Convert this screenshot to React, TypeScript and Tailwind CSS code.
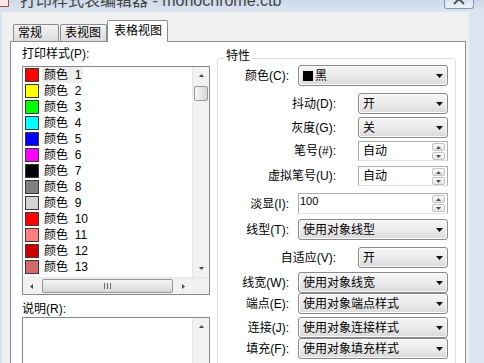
import React from "react";

const swatches = [
  "#ff0000",
  "#ffff00",
  "#00ff00",
  "#00ffff",
  "#0000ff",
  "#ff00ff",
  "#000000",
  "#808080",
  "#d3d3d3",
  "#ff0000",
  "#ff7f7f",
  "#cc0000",
  "#d46a6a",
];

function Tri({ dir, w = 7, h = 4, color = "#111" }: { dir: "up" | "down" | "left" | "right"; w?: number; h?: number; color?: string }) {
  const paths = {
    up: "M0 4L3.5 0L7 4Z",
    down: "M0 0H7L3.5 4Z",
    left: "M4 0V7L0 3.5Z",
    right: "M0 0V7L4 3.5Z",
  };
  const vb = dir === "up" || dir === "down" ? "0 0 7 4" : "0 0 4 7";
  return (
    <svg width={w} height={h} viewBox={vb} preserveAspectRatio="none">
      <path d={paths[dir]} fill={color} />
    </svg>
  );
}

function VScroll({ thumb }: { thumb?: boolean }) {
  return (
    <div className="w-[17px] h-full bg-[#f2f2f2] border-l border-[#e6e6e6] flex flex-col items-center">
      <div className="h-[17px] flex items-center justify-center">
        <Tri dir="up" w={5} h={3} color="#4a4a4a" />
      </div>
      {thumb && (
        <div className="mt-[2px] w-[14px] h-[15px] border border-[#979797] rounded-[2px] bg-gradient-to-r from-[#f6f6f6] to-[#d6d6d6]" />
      )}
      <div className="flex-1" />
      <div className="h-[17px] flex items-center justify-center">
        <Tri dir="down" w={5} h={3} color="#4a4a4a" />
      </div>
    </div>
  );
}

function HScroll() {
  return (
    <div className="flex h-[17px] bg-[#f2f2f2] border-t border-[#e6e6e6]">
      <div className="w-[17px] flex items-center justify-center">
        <Tri dir="left" w={3} h={5} color="#4a4a4a" />
      </div>
      <div className="flex-1 px-[2px] py-[1px]">
        <div className="h-full border border-[#979797] rounded-[2px] bg-gradient-to-b from-[#f6f6f6] to-[#d6d6d6] flex items-center justify-center gap-[2px]">
          <div className="w-px h-[6px] bg-[#6b6b6b]" />
          <div className="w-px h-[6px] bg-[#6b6b6b]" />
          <div className="w-px h-[6px] bg-[#6b6b6b]" />
        </div>
      </div>
      <div className="w-[17px] flex items-center justify-center">
        <Tri dir="right" w={3} h={5} color="#4a4a4a" />
      </div>
      <div className="w-[17px] bg-[#f0f0f0]" />
    </div>
  );
}

function Combo({ wide, children }: { wide?: boolean; children: React.ReactNode }) {
  return (
    <div
      className={`${wide ? "w-[150px]" : "w-[90px]"} h-[21px] border border-[#8a8a8a] rounded-[3px] bg-gradient-to-b from-[#f5f5f5] via-[#ececec] to-[#d9d9d9] shadow-[inset_0_0_0_1px_#fbfbfb] flex items-center pl-[4px] pr-[4px]`}
    >
      <span className="flex-1 flex items-center whitespace-nowrap">{children}</span>
      <Tri dir="down" />
    </div>
  );
}

function SpinBtn({ up }: { up?: boolean }) {
  return (
    <div className="h-[8px] w-[13px] border border-[#c3c3c3] rounded-[2px] bg-gradient-to-b from-[#fbfbfb] to-[#e4e4e4] flex items-center justify-center">
      <Tri dir={up ? "up" : "down"} w={5} h={3} color="#505050" />
    </div>
  );
}

function Spin({ wide, text, small }: { wide?: boolean; text: string; small?: boolean }) {
  return (
    <div
      className={`${wide ? "w-[150px] h-[21px]" : "w-[90px] h-[20px]"} border border-[#abadb3] border-b-[#dfe3e8] bg-white flex`}
    >
      <span className={small ? "flex-1 pl-[1px] pt-[1px] text-[11px] leading-[13px]" : "flex-1 pl-[4px] self-center"}>
        {text}
      </span>
      <div className="flex flex-col gap-[1px] pt-[1px] mr-[2px]">
        <SpinBtn up />
        <SpinBtn />
      </div>
    </div>
  );
}

function Row({
  label,
  wide,
  mt,
  children,
}: {
  label: string;
  wide?: boolean;
  mt: string;
  children: React.ReactNode;
}) {
  return (
    <div className={`flex items-center justify-end ${mt}`}>
      <span className={`whitespace-nowrap ${wide ? "mr-[9px]" : "mr-[22px]"}`}>{label}</span>
      {children}
    </div>
  );
}

export default function App() {
  return (
    <div className="w-[484px] h-[363px] overflow-hidden bg-[#dbe5f1] flex flex-col font-['Liberation_Sans','Noto_Sans_CJK_SC',sans-serif] text-[12px] leading-[16px] text-black">
      {/* title bar */}
      <div className="shrink-0 h-[12px] flex overflow-hidden bg-gradient-to-b from-[#cdd9e8] to-[#dce6f2]">
        <div className="shrink-0 w-[9px] h-[7px] bg-[#f5e9e9] border-b border-r border-[#b84040]" />
        <span className="ml-[11px] -mt-[9px] text-[16px] leading-[20px] text-[#444] whitespace-nowrap">
          打印样式表编辑器 - monochrome.ctb
        </span>
        <div className="shrink-0 ml-auto mr-[10px] w-[30px] h-[9px] border border-t-0 border-[#8596ad] rounded-b-[3px] bg-gradient-to-b from-[#d9e3ef] to-[#eef3f8] overflow-hidden">
          <svg width="30" height="9" viewBox="0 0 30 9">
            <path d="M9 -6L19 4M19 -6L9 4" stroke="#4b5563" strokeWidth="2" />
          </svg>
        </div>
      </div>

      {/* body */}
      <div className="shrink-0 h-[400px] ml-[2px] w-[467px] bg-[#f0f0f0] flex flex-col">
        {/* tabs */}
        <div className="shrink-0 flex items-end h-[29px] pl-[11px]">
          <div className="w-[46px] h-[17px] border border-b-0 border-[#898c95] rounded-t-[2px] bg-gradient-to-b from-[#f3f3f3] to-[#dcdcdc] pl-[4px] leading-[16px]">
            常规
          </div>
          <div className="ml-[1px] w-[47px] h-[17px] border border-b-0 border-[#898c95] rounded-t-[2px] bg-gradient-to-b from-[#f3f3f3] to-[#dcdcdc] pl-[4px] leading-[16px]">
            表视图
          </div>
          <div className="w-[61px] h-[22px] -mb-[1px] relative z-10 border border-b-0 border-[#898c95] rounded-t-[2px] bg-white pl-[6px] pt-[2px] leading-[16px]">
            表格视图
          </div>
        </div>

        {/* panel */}
        <div className="ml-[8px] w-[456px] flex-1 border border-[#898c95] bg-white flex pl-[11px]">
          {/* left column */}
          <div className="w-[188px] flex flex-col">
            <div className="mt-[4px] h-[16px]">打印样式(P):</div>
            <div className="mt-[4px] h-[229px] border border-[#828790] flex flex-col">
              <div className="flex flex-1 min-h-0">
                <div className="flex-1 flex flex-col">
                  {swatches.map((c, i) => (
                    <div key={i} className="h-[16px] flex items-center pl-[2px]">
                      <div className="w-[14px] h-[14px] border border-[#3a3a3a]" style={{ background: c }} />
                      <span className={`ml-[3px] px-[2px] ${i === 0 ? "bg-[#eeeeee]" : ""}`}>
                        颜色&nbsp;&nbsp;{i + 1}
                      </span>
                    </div>
                  ))}
                </div>
                <VScroll thumb />
              </div>
              <HScroll />
            </div>
            <div className="mt-[6px] h-[16px]">说明(R):</div>
            <div className="h-[70px] border border-[#828790] flex justify-end">
              <VScroll />
            </div>
          </div>

          {/* right group */}
          <fieldset className="ml-[7px] mt-[9px] w-[239px] self-start border border-[#d5dfe5] rounded-[3px] pr-[7px] pb-[8px]">
            <legend className="ml-[6px] px-[2px] h-[14px] leading-[12px]">
              <span className="relative -top-[1px]">特性</span>
            </legend>
            <div className="flex flex-col">
              <Row label="颜色(C):" wide mt="mt-0">
                <Combo wide>
                  <span className="inline-block w-[10px] h-[10px] bg-black mr-[2px]" />黑
                </Combo>
              </Row>
              <Row label="抖动(D):" mt="mt-[7px]">
                <Combo>开</Combo>
              </Row>
              <Row label="灰度(G):" mt="mt-[3px]">
                <Combo>关</Combo>
              </Row>
              <Row label="笔号(#):" mt="mt-[3px]">
                <Spin text="自动" />
              </Row>
              <Row label="虚拟笔号(U):" mt="mt-[5px]">
                <Spin text="自动" />
              </Row>
              <Row label="淡显(I):" wide mt="mt-[7px]">
                <Spin wide small text="100" />
              </Row>
              <Row label="线型(T):" wide mt="mt-[5px]">
                <Combo wide>使用对象线型</Combo>
              </Row>
              <Row label="自适应(V):" mt="mt-[7px]">
                <Combo>开</Combo>
              </Row>
              <Row label="线宽(W):" wide mt="mt-[4px]">
                <Combo wide>使用对象线宽</Combo>
              </Row>
              <Row label="端点(E):" wide mt="mt-0">
                <Combo wide>使用对象端点样式</Combo>
              </Row>
              <Row label="连接(J):" wide mt="mt-[3px]">
                <Combo wide>使用对象连接样式</Combo>
              </Row>
              <Row label="填充(F):" wide mt="mt-0">
                <Combo wide>使用对象填充样式</Combo>
              </Row>
            </div>
          </fieldset>
        </div>
      </div>
    </div>
  );
}
